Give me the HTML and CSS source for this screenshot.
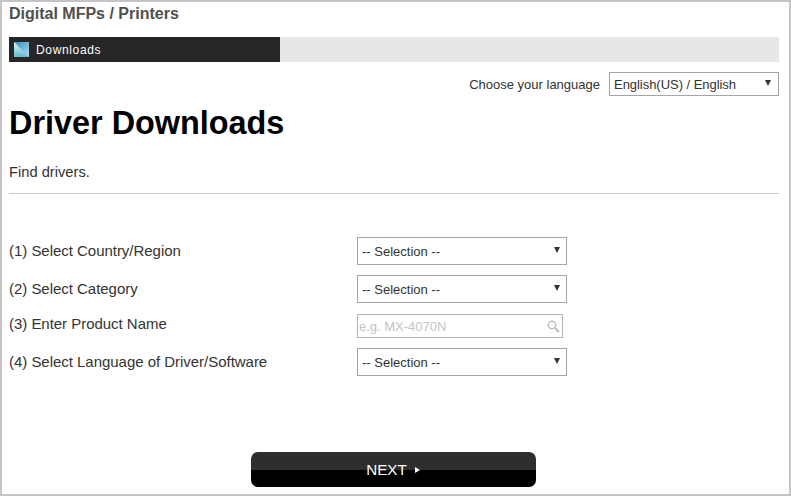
FILE: index.html
```html
<!DOCTYPE html>
<html lang="en">
<head>
<meta charset="utf-8">
<title>Driver Downloads</title>
<link rel="stylesheet" href="styles.css">
</head>
<body>
<div class="frame">
  <div class="brand">Digital MFPs / Printers</div>
  <div class="navbar">
    <div class="nav-active">
      <svg class="nav-icon" width="15" height="15" viewBox="0 0 15 15">
        <defs>
          <linearGradient id="nl" x1="0" y1="0" x2="0" y2="1"><stop offset="0" stop-color="#e8f4f8"/><stop offset="1" stop-color="#62b8d4"/></linearGradient>
          <linearGradient id="nu" x1="0" y1="0" x2="1" y2="1"><stop offset="0" stop-color="#2f8fc0"/><stop offset="1" stop-color="#b4dcec"/></linearGradient>
        </defs>
        <rect width="15" height="15" fill="url(#nl)"/>
        <path d="M0 0H15V15Z" fill="url(#nu)"/>
      </svg>
      <span>Downloads</span>
    </div>
  </div>
  <div class="lang-row">
    <span class="lang-label">Choose your language</span>
    <div class="select lang-select"><span>English(US) / English</span><i class="caret"></i></div>
  </div>
  <h1>Driver Downloads</h1>
  <p class="intro">Find drivers.</p>
  <div class="form">
    <div class="row"><span class="label">(1) Select Country/Region</span><div class="select"><span>-- Selection --</span><i class="caret"></i></div></div>
    <div class="row"><span class="label">(2) Select Category</span><div class="select"><span>-- Selection --</span><i class="caret"></i></div></div>
    <div class="row row-input"><span class="label">(3) Enter Product Name</span>
      <div class="input"><span>e.g. MX-4070N</span>
        <svg width="13" height="13" viewBox="0 0 13 13"><circle cx="5" cy="5" r="3.7" fill="none" stroke="#bbb" stroke-width="1.4"/><path d="M8 8l4 4" stroke="#bbb" stroke-width="2"/></svg>
      </div>
    </div>
    <div class="row"><span class="label">(4) Select Language of Driver/Software</span><div class="select"><span>-- Selection --</span><i class="caret"></i></div></div>
  </div>
  <div class="actions">
    <div class="next"><span>NEXT</span><i class="next-arrow"></i></div>
  </div>
</div>
</body>
</html>
```
FILE: styles.css
```css
* { box-sizing: border-box; }
html, body { margin: 0; height: 100%; }
body { font-family: "Liberation Sans", Arial, sans-serif; color: #333; background: #fff; }
.frame {
  width: 791px; height: 496px; overflow: hidden;
  border: 2px solid #c4c4c4;
  padding: 0 10px 0 7px;
}
.brand { font-size: 16px; font-weight: 700; color: #505050; line-height: 16px; margin-top: 4px; }
.navbar { height: 25px; background: #e6e7e6; margin-top: 15px; }
.nav-active { width: 271px; height: 25px; background: #262626; color: #fff; display: flex; align-items: center; padding-left: 5px; font-size: 12px; letter-spacing: .65px; }
.nav-icon { margin-right: 7px; }
.lang-row { display: flex; justify-content: flex-end; align-items: center; margin-top: 10px; height: 24px; font-size: 13px; }
.lang-label { margin-right: 9px; }
.select {
  width: 210px; height: 28px; border: 1px solid #a5a5a5; background: #fff;
  display: flex; align-items: center; justify-content: space-between;
  padding: 0 6px 0 4px; font-size: 13px;
}
.lang-select { width: 170px; height: 24px; padding-right: 7px; letter-spacing: -.04px; }
.caret { width: 0; height: 0; border-left: 3px solid transparent; border-right: 3px solid transparent; border-top: 6px solid #333; margin-bottom: 2px; }
h1 { margin: 8px 0 0; font-size: 32.4px; line-height: 38px; font-weight: 700; color: #000; }
.intro { margin: 20px 0 0; font-size: 14.7px; line-height: 20px; padding-bottom: 11px; border-bottom: 1px solid #c9c9c9; }
.form { margin-top: 43px; display: flex; flex-direction: column; gap: 10px; }
.row { display: flex; align-items: center; min-height: 28px; font-size: 15px; }
.row-input { min-height: 24px; margin-top: 1px; }
.label { width: 348px; letter-spacing: -.03px; margin-bottom: 2px; }
.row-input .label { margin-bottom: 6px; }
.input {
  width: 206px; height: 24px; border: 1px solid #b4b4b4;
  display: flex; align-items: center; justify-content: space-between;
  padding: 0 2px 0 1px; font-size: 13px; color: #c4c4c4;
}
.actions { display: flex; justify-content: center; margin-top: 76px; padding-right: 2px; }
.next {
  width: 285px; height: 35px; border-radius: 7px;
  background: linear-gradient(#2e2e2e 0, #2e2e2e 50%, #000 50%, #000 100%);
  color: #fff; font-size: 15.2px; display: flex; align-items: center; justify-content: center; gap: 8px;
}
.next-arrow { width: 0; height: 0; border-top: 3px solid transparent; border-bottom: 3px solid transparent; border-left: 5px solid #fff; }
```
